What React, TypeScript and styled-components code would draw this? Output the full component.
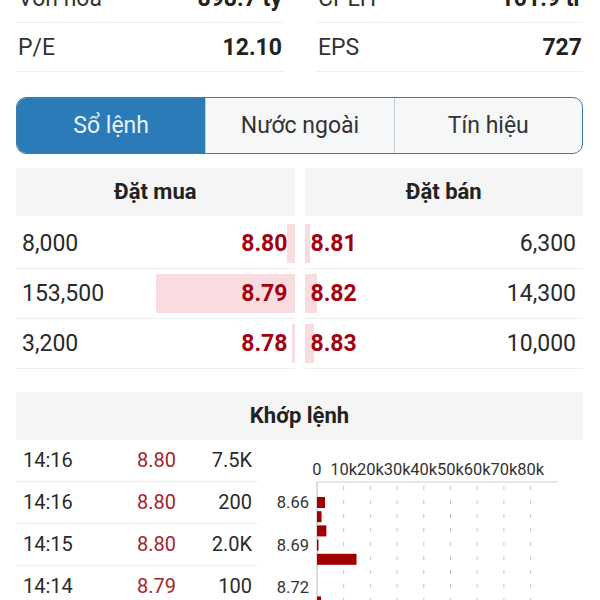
import styled, {createGlobalStyle} from "styled-components";

const GlobalStyle = createGlobalStyle`
    html, body {
        margin: 0;
        padding: 0;
        overflow: hidden;
        background: #ffffff;
    }
    body {
        font-family: Roboto, "Noto Sans", "Liberation Sans", sans-serif;
        color: #222;
    }
`

type Stat = {label: string; value: string};
type BookLevel = {price: string; volume: string; amount: number};
type Trade = {time: string; price: string; volume: string};

const stats: Stat[][] = [
    [{label: "Vốn hóa", value: "898.7 tỷ"}, {label: "CPLH", value: "101.9 tr"}],
    [{label: "P/E", value: "12.10"}, {label: "EPS", value: "727"}],
];

const buys: BookLevel[] = [
    {price: "8.80", volume: "8,000", amount: 8000},
    {price: "8.79", volume: "153,500", amount: 153500},
    {price: "8.78", volume: "3,200", amount: 3200},
];

const sells: BookLevel[] = [
    {price: "8.81", volume: "6,300", amount: 6300},
    {price: "8.82", volume: "14,300", amount: 14300},
    {price: "8.83", volume: "10,000", amount: 10000},
];

const trades: Trade[] = [
    {time: "14:16", price: "8.80", volume: "7.5K"},
    {time: "14:16", price: "8.80", volume: "200"},
    {time: "14:15", price: "8.80", volume: "2.0K"},
    {time: "14:14", price: "8.79", volume: "100"},
];

// khối lượng theo giá, 8.66 -> 8.73
const priceVolumes = [3000, 1700, 3500, 300, 14800, 0, 0, 1500];

const tabs = ["Sổ lệnh", "Nước ngoài", "Tín hiệu"];

const BAR_SCALE = 139 / 153500;

const VolumeChart = () => {
    const x0 = 59;
    const step = 26.7;
    const axisY = 42;
    const ticks = [0, 1, 2, 3, 4, 5, 6, 7, 8];
    const labels: {[k: number]: string} = {0: "8.66", 3: "8.69", 6: "8.72"};

    return (
        <ChartSvg width={325} height={160} viewBox="0 0 325 160">
            {ticks.map(i => (
                <text key={"t" + i} x={x0 + i * step} y={35} fontSize={16.5} textAnchor="middle" fill="#333">
                    {i === 0 ? "0" : `${i * 10}k`}
                </text>
            ))}
            <line x1={x0} y1={axisY} x2={300} y2={axisY} stroke="#cfcfcf" strokeWidth={1}/>
            {ticks.slice(1).map(i => (
                <line key={"g" + i} x1={x0 + i * step} y1={axisY + 4} x2={x0 + i * step} y2={160}
                      stroke="#c4c4c4" strokeWidth={1} strokeDasharray="4 10"/>
            ))}
            <line x1={x0} y1={axisY} x2={x0} y2={160} stroke="#b9b9b9" strokeWidth={1}/>
            {priceVolumes.map((v, i) => {
                const top = 57 + i * 14.2;
                return (
                    <g key={"b" + i}>
                        {labels[i] && (
                            <text x={51} y={top + 11} fontSize={16.5} textAnchor="end" fill="#333">{labels[i]}</text>
                        )}
                        {v > 0 && (
                            <rect x={x0} y={top} width={Math.max(1.5, v / 10000 * step)} height={11} fill="#a00000"/>
                        )}
                    </g>
                );
            })}
        </ChartSvg>
    );
};

export default function App() {
    return (
        <>
            <GlobalStyle/>
            <Page>
                <StatGrid>
                    {stats.flat().map((s, i) => (
                        <StatRow key={i}>
                            <StatLabel>{s.label}</StatLabel>
                            <StatValue>{s.value}</StatValue>
                        </StatRow>
                    ))}
                </StatGrid>

                <Tabs>
                    {tabs.map((t, i) => (
                        <Tab key={t} $active={i === 0}>{t}</Tab>
                    ))}
                </Tabs>

                <Book>
                    <BookColumn>
                        <SectionHeader>Đặt mua</SectionHeader>
                        <BookRows>
                            {buys.map(b => (
                                <BookRow key={b.price}>
                                    <DepthBar $side="buy" style={{width: b.amount * BAR_SCALE}}/>
                                    <Volume>{b.volume}</Volume>
                                    <BookPrice>{b.price}</BookPrice>
                                </BookRow>
                            ))}
                        </BookRows>
                    </BookColumn>
                    <BookColumn>
                        <SectionHeader>Đặt bán</SectionHeader>
                        <BookRows>
                            {sells.map(s => (
                                <BookRow key={s.price}>
                                    <DepthBar $side="sell" style={{width: s.amount * BAR_SCALE}}/>
                                    <BookPrice>{s.price}</BookPrice>
                                    <Volume>{s.volume}</Volume>
                                </BookRow>
                            ))}
                        </BookRows>
                    </BookColumn>
                </Book>

                <Matched>
                    <SectionHeader>Khớp lệnh</SectionHeader>
                    <MatchedBody>
                        <TradeList>
                            {trades.map((t, i) => (
                                <TradeRow key={i}>
                                    <TradeTime>{t.time}</TradeTime>
                                    <TradePrice>{t.price}</TradePrice>
                                    <TradeVolume>{t.volume}</TradeVolume>
                                </TradeRow>
                            ))}
                        </TradeList>
                        <VolumeChart/>
                    </MatchedBody>
                </Matched>
            </Page>
        </>
    );
}

const Page = styled.div`
    padding: 0 17px 0 16px;
    height: 600px;
    overflow: hidden;
`

const StatGrid = styled.div`
    display: grid;
    grid-template-columns: 1fr 1fr;
    column-gap: 33px;
    margin-top: -26px;
`

const StatRow = styled.div`
    display: flex;
    justify-content: space-between;
    align-items: center;
    height: 48px;
    border-bottom: 1px solid #efefef;
    padding: 0 1px 0 2px;
    font-size: 23px;
`

const StatLabel = styled.span`
    color: #333;
`

const StatValue = styled.span`
    font-weight: 700;
    color: #222;
`

const Tabs = styled.div`
    display: grid;
    grid-template-columns: repeat(3, 1fr);
    margin-top: 25px;
    height: 55px;
    border: 1.5px solid #3f7cae;
    border-radius: 10px;
    overflow: hidden;
    background: #f6f7f8;
`

const Tab = styled.div<{ $active?: boolean }>`
    display: flex;
    align-items: center;
    justify-content: center;
    padding-bottom: 1px;
    font-size: 23px;
    background: ${p => p.$active ? "#2b7bb9" : "transparent"};
    color: ${p => p.$active ? "#e8f2fa" : "#333"};

    & + & {
        border-left: 1px solid #c6ccd2;
    }
`

const Book = styled.div`
    display: grid;
    grid-template-columns: 1fr 1fr;
    column-gap: 10px;
    margin-top: 14px;
`

const BookColumn = styled.div`
    display: flex;
    flex-direction: column;
`

const SectionHeader = styled.div`
    height: 48px;
    display: flex;
    align-items: center;
    justify-content: center;
    padding-bottom: 2px;
    box-sizing: border-box;
    background: #f5f5f5;
    font-size: 22px;
    font-weight: 700;
    color: #222;
`

const BookRows = styled.div`
    margin-top: 3px;
`

const BookRow = styled.div`
    position: relative;
    height: 49px;
    border-bottom: 1px solid #eeeeee;
    display: flex;
    justify-content: space-between;
    align-items: center;
    padding: 0 7px 0 6px;
    font-size: 23px;
`

const DepthBar = styled.div<{ $side: "buy" | "sell" }>`
    position: absolute;
    top: 5px;
    bottom: 5px;
    ${p => p.$side === "buy" ? "right: 0;" : "left: 0;"}
    min-width: 2px;
    background: #f9dcdf;
`

const Volume = styled.span`
    position: relative;
    color: #2a2a2a;
`

const BookPrice = styled.span`
    position: relative;
    font-weight: 700;
    color: #a3000f;
`

const Matched = styled.div`
    margin-top: 23px;
`

const MatchedBody = styled.div`
    display: flex;
`

const TradeList = styled.div`
    width: 242px;
    flex-shrink: 0;
`

const TradeRow = styled.div`
    display: flex;
    align-items: center;
    height: 41px;
    border-bottom: 1px solid #eeeeee;
    padding: 0 6px 2px 7px;
    box-sizing: border-box;
    height: 42px;
    font-size: 20px;
`

const TradeTime = styled.span`
    width: 100px;
    color: #2a2a2a;
`

const TradePrice = styled.span`
    width: 53px;
    text-align: right;
    color: #a3262c;
`

const TradeVolume = styled.span`
    flex: 1;
    text-align: right;
    color: #2a2a2a;
`

const ChartSvg = styled.svg`
    display: block;
    flex-shrink: 0;
    font-family: Roboto, "Noto Sans", sans-serif;
`
